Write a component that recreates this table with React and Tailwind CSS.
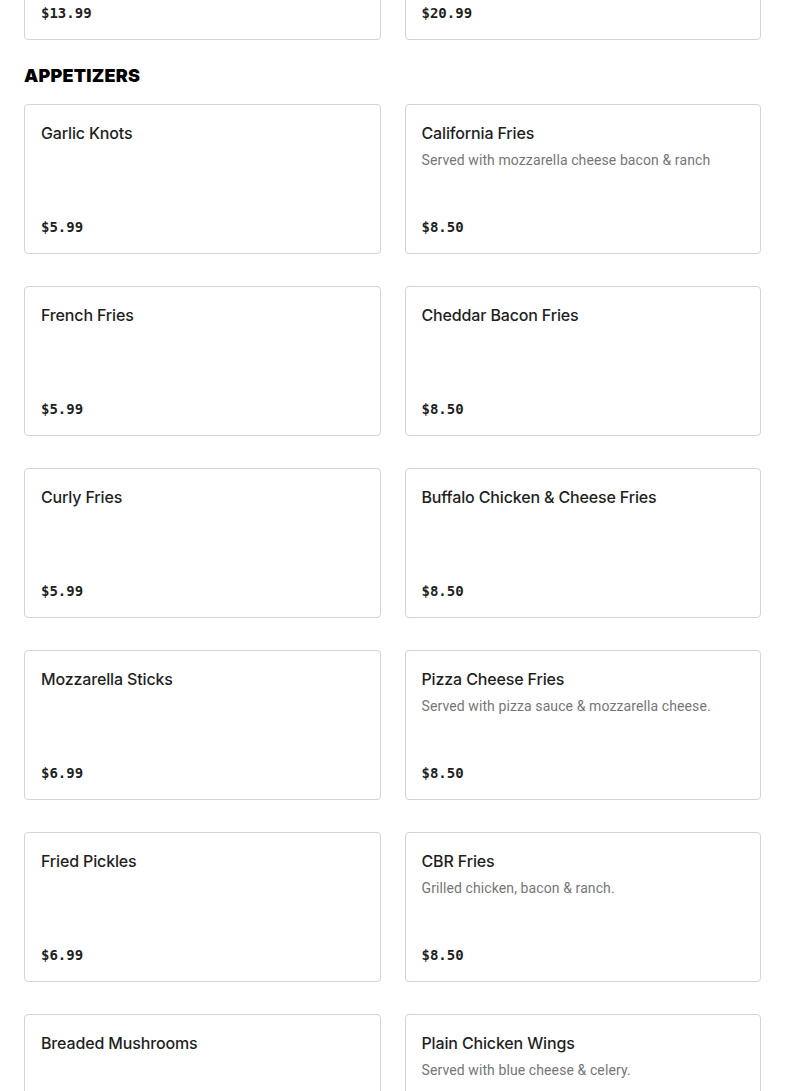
const topRow = [
    { name: 'Lorem', price: '$13.99' },
    { name: 'Lorem', price: '$20.99' },
];

const appetizers = [
    { name: 'Garlic Knots', price: '$5.99' },
    { name: 'California Fries', desc: 'Served with mozzarella cheese bacon & ranch', price: '$8.50' },
    { name: 'French Fries', price: '$5.99' },
    { name: 'Cheddar Bacon Fries', price: '$8.50' },
    { name: 'Curly Fries', price: '$5.99' },
    { name: 'Buffalo Chicken & Cheese Fries', price: '$8.50' },
    { name: 'Mozzarella Sticks', price: '$6.99' },
    { name: 'Pizza Cheese Fries', desc: 'Served with pizza sauce & mozzarella cheese.', price: '$8.50' },
    { name: 'Fried Pickles', price: '$6.99' },
    { name: 'CBR Fries', desc: 'Grilled chicken, bacon & ranch.', price: '$8.50' },
    { name: 'Breaded Mushrooms', price: '$6.99' },
    { name: 'Plain Chicken Wings', desc: 'Served with blue cheese & celery.', price: '$8.50' },
];

function ItemCard({ item }) {
    return (
        <div className="h-[150px] flex flex-col justify-between border border-[#d4d4d4] rounded-[4px] bg-white p-4">
            <div>
                <h3 className="text-[16px] leading-6 font-medium text-[#1f1f1f] font-['Inter',sans-serif] tracking-[-0.15px]">
                    {item.name}
                </h3>
                {item.desc && (
                    <p className="mt-[5px] text-[14px] leading-5 text-[#767676] font-['Roboto',sans-serif] tracking-[0.1px]">
                        {item.desc}
                    </p>
                )}
            </div>
            <p className="text-[14px] leading-5 font-bold text-[#1f1f1f] font-['DejaVu_Sans_Mono','Liberation_Mono',monospace]">
                {item.price}
            </p>
        </div>
    );
}

export default function App() {
    return (
        <div className="min-h-screen bg-white px-6 overflow-hidden">
            <div className="grid grid-cols-2 gap-6 -mt-[110px]">
                {topRow.map((item, i) => (
                    <ItemCard key={i} item={item} />
                ))}
            </div>

            <h2 className="mt-[22px] mb-[14px] text-[18px] leading-7 font-black text-black font-['Inter',sans-serif] tracking-[0.2px]">
                APPETIZERS
            </h2>

            <div className="grid grid-cols-2 gap-x-6 gap-y-8">
                {appetizers.map((item) => (
                    <ItemCard key={item.name} item={item} />
                ))}
            </div>
        </div>
    );
}
